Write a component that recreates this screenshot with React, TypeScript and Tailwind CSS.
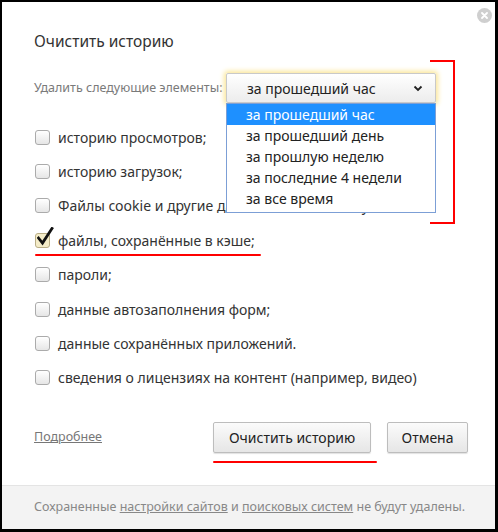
import React from 'react';

const items = [
  'историю просмотров;',
  'историю загрузок;',
  'Файлы cookie и другие данные сайтов и модулей',
  'файлы, сохранённые в кэше;',
  'пароли;',
  'данные автозаполнения форм;',
  'данные сохранённых приложений.',
  'сведения о лицензиях на контент (например, видео)',
];

const periods = [
  'за прошедший час',
  'за прошедший день',
  'за прошлую неделю',
  'за последние 4 недели',
  'за все время',
];

function Checkbox({ checked }: { checked: boolean }) {
  if (checked) {
    return (
      <div className="relative w-[15px] h-[15px] rounded-[3px] border border-[#b9ad86] bg-[#f4ecc8] shrink-0">
        <svg className="absolute left-[1px] top-[-7px]" width="17" height="19" viewBox="0 0 17 19">
          <path d="M1.5 11 L5.5 16 L15 1.5" fill="none" stroke="#111" strokeWidth="2.8" strokeLinecap="square" />
        </svg>
      </div>
    );
  }
  return (
    <div className="w-[15px] h-[15px] rounded-[3px] border border-[#ababab] bg-gradient-to-b from-white to-[#e6e6e6] shrink-0" />
  );
}

export default function App() {
  return (
    <div className="w-[498px] h-[532px] bg-black pl-[2px] pt-[2px] pr-[3px] pb-[3px] font-['Noto_Sans','Open_Sans',sans-serif]">
      <div className="relative flex flex-col h-full bg-white">
        {/* close */}
        <div className="absolute right-[3px] top-[6px] w-[15px] h-[15px] rounded-full bg-[#cfcfcf] flex items-center justify-center">
          <svg width="7" height="7" viewBox="0 0 7 7">
            <path d="M1 1 L6 6 M6 1 L1 6" stroke="#fff" strokeWidth="1.8" strokeLinecap="round" />
          </svg>
        </div>

        <div className="flex-1 pl-[32px] pr-[27px] pt-[27px]">
          <h1 className="text-[15.5px] leading-[24px] text-[#333]">Очистить историю</h1>

          <div className="relative mt-[20px] flex items-center">
            <span className="text-[12.5px] text-[#7a7a7a] w-[192px] whitespace-nowrap">Удалить следующие элементы:</span>
            <div className="relative w-[210px] h-[30px] rounded-[2px] border border-[#c9c9c9] bg-gradient-to-b from-white to-[#ececec] shadow-[0_0_5px_2px_#fbe79a] flex items-center pl-[20px] pr-[12px]">
              <span className="flex-1 text-[14px] text-[#222]">за прошедший час</span>
              <svg width="10" height="7" viewBox="0 0 10 7">
                <path d="M1.5 1.5 L5 5 L8.5 1.5" fill="none" stroke="#222" strokeWidth="1.8" />
              </svg>
              {/* dropdown list */}
              <div className="absolute z-20 left-[-1px] top-[29px] w-[210px] border border-[#7c9fd6] bg-white pb-[3px]">
                {periods.map((p, i) => (
                  <div
                    key={p}
                    className={`h-[21px] flex items-center pl-[19px] text-[14px] ${
                      i === 0 ? 'bg-[#1e90ff] text-white' : 'text-[#222]'
                    }`}
                  >
                    {p}
                  </div>
                ))}
              </div>
            </div>
          </div>

          <div className="relative mt-[17px]">
            {items.map((label, i) => (
              <div key={label} className="relative h-[34.4px] flex items-center gap-[8px] pl-[1px]">
                <Checkbox checked={i === 3} />
                <span className="text-[14px] text-[#333] whitespace-nowrap">{label}</span>
                {i === 3 && (
                  <div className="absolute left-[1px] top-[31px] w-[226px] h-[2px] bg-[#f00] rounded-full" />
                )}
              </div>
            ))}
          </div>

          <div className="mt-[27px] flex items-center">
            <a className="flex-1 text-[12.5px] text-[#777] underline">Подробнее</a>
            <div className="relative">
              <button className="w-[158px] h-[31px] rounded-[2px] border border-[#bdbdbd] bg-gradient-to-b from-[#fbfbfb] to-[#e6e6e6] shadow-[0_1px_1px_rgba(0,0,0,0.12)] text-[14px] text-[#222]">
                Очистить историю
              </button>
              <div className="absolute left-0 top-[39px] w-[164px] h-[2px] bg-[#f00] rounded-full" />
            </div>
            <button className="ml-[16px] w-[81px] h-[31px] rounded-[2px] border border-[#bdbdbd] bg-gradient-to-b from-[#fbfbfb] to-[#e6e6e6] shadow-[0_1px_1px_rgba(0,0,0,0.12)] text-[14px] text-[#222]">
              Отмена
            </button>
          </div>
        </div>

        <div className="h-[44px] border-t border-[#e4e4e4] bg-[#f3f3f3] flex items-center pl-[32px] text-[12.5px] text-[#888]">
          <span>
            Сохраненные <span className="underline">настройки сайтов</span> и{' '}
            <span className="underline">поисковых систем</span> не будут удалены.
          </span>
        </div>

        {/* red bracket annotation */}
        <div className="absolute left-[428px] top-[58px] w-[25px] h-[164px] border-t-2 border-r-2 border-b-2 border-[#f00] z-30" />
      </div>
    </div>
  );
}
